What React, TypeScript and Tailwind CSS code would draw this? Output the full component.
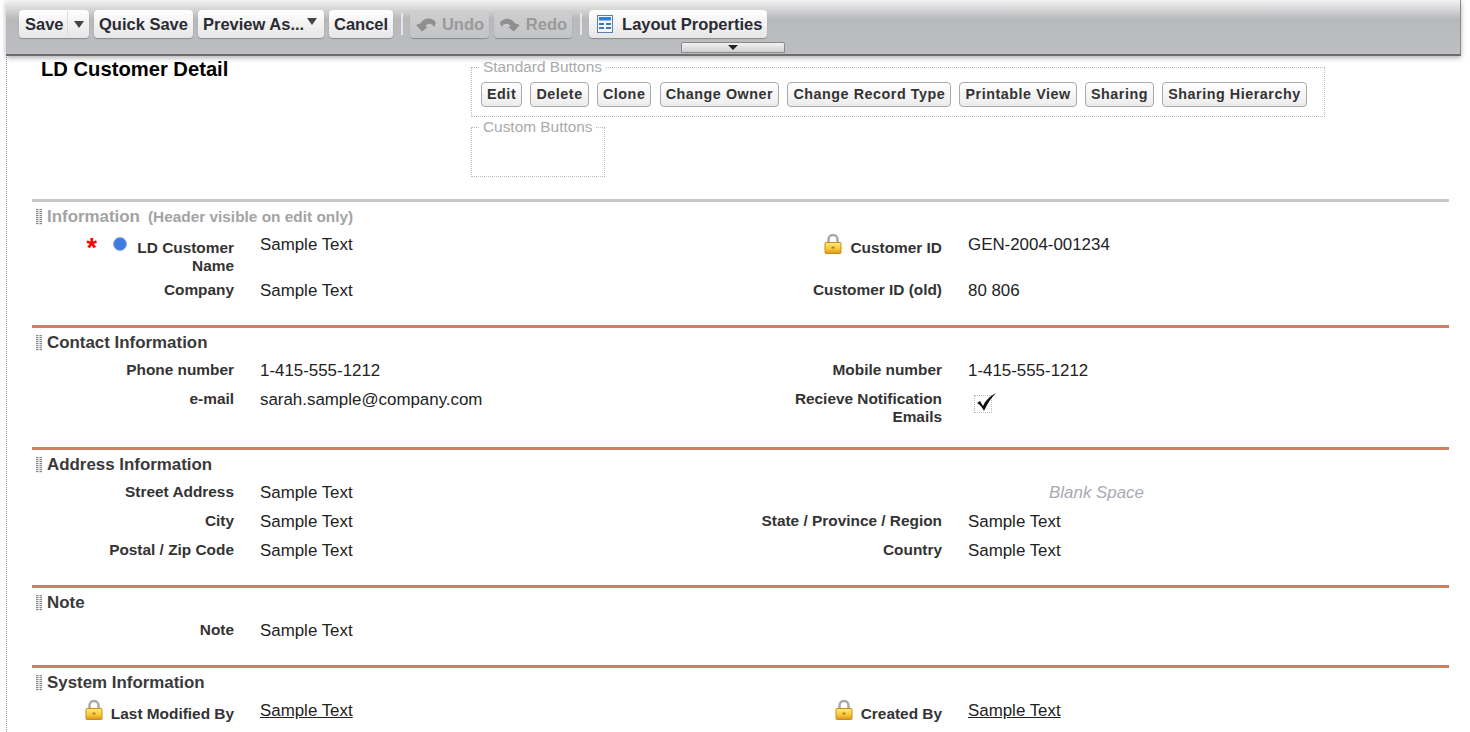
import type { ReactNode } from 'react';

function Lock() {
  return (
    <svg width="18" height="20" viewBox="0 0 18 20" className="shrink-0">
      <defs>
        <linearGradient id="lockBody" x1="0" y1="0" x2="0" y2="1">
          <stop offset="0" stopColor="#ffec7a" />
          <stop offset="0.55" stopColor="#f8cb3a" />
          <stop offset="1" stopColor="#e0921a" />
        </linearGradient>
      </defs>
      <path d="M4.5 9V5.5a4.5 4.5 0 0 1 9 0V9" fill="none" stroke="#a8a8a8" strokeWidth="2.5" />
      <rect x="1" y="8.5" width="16" height="11" rx="1" fill="url(#lockBody)" stroke="#cf8a1c" />
      <rect x="7.5" y="12.5" width="3" height="2" fill="#b67f1e" />
    </svg>
  );
}

function Grip() {
  const rows = [0, 2, 4, 6, 8, 10, 12, 14];
  return (
    <svg width="6" height="16" viewBox="0 0 6 16" className="shrink-0">
      {rows.map((y) => (
        <g key={y} fill="#8a8a8a">
          <rect x="0" y={y} width="2.5" height="1.2" />
          <rect x="3.5" y={y} width="2.5" height="1.2" />
        </g>
      ))}
    </svg>
  );
}

function Caret() {
  return <span className="block h-0 w-0 border-x-[5px] border-t-[7px] border-x-transparent border-t-[#444]" />;
}

function ArrowIcon({ flip }: { flip?: boolean }) {
  return (
    <svg width="22" height="16" viewBox="0 0 22 16" className={flip ? '-scale-x-100' : ''}>
      <path d="M1 9l4.5-1.6C8.5 2.5 16 0 21 6.5L19.5 11C17 7 13 6.5 10.5 10l2 1.2L7 15.5z" fill="#8f8f8f" />
    </svg>
  );
}

function TableIcon() {
  return (
    <svg width="16" height="18" viewBox="0 0 16 18" className="shrink-0">
      <rect x="0.5" y="0.5" width="15" height="17" fill="#f4f8fd" stroke="#5d7ea6" />
      <rect x="2" y="2" width="12" height="3.5" fill="#2f80dc" />
      <path d="M2 8h5v2H2zM9 8h5v2H9zM2 12h5v2H2zM9 12h5v2H9z" fill="#3f79ba" />
    </svg>
  );
}

function ToolButton({ children, disabled, className }: { children: ReactNode; disabled?: boolean; className?: string }) {
  return (
    <div
      className={`flex h-[28px] items-center rounded-[4px] px-[5px] text-[16.5px] font-bold whitespace-nowrap shadow-[0_1px_1px_#8a8a8a] ${
        disabled ? 'bg-linear-to-b from-[#cfcfd0] to-[#c3c4c6] text-[#9a9a9a]' : 'bg-linear-to-b from-white to-[#e6e6e6] text-[#2b2b33]'
      } ${className ?? ''}`}
    >
      {children}
    </div>
  );
}

function Separator() {
  return <div className="h-[22px] w-[2px] bg-[#e4e4e4]" />;
}

function Toolbar() {
  return (
    <div className="relative z-10 -ml-px h-[56px] w-[1455px] border-r border-b-[2px] border-r-[#8f8585] border-b-[#6d6d6d] bg-linear-to-b from-[#f3f3f3] via-[#b8b9bb] via-35% to-[#bdbec2] pt-[10px] pl-[13px] shadow-[0_2px_5px_rgba(0,0,0,0.3)]">
      <div className="flex items-center">
        <ToolButton className="w-[70px] pl-[6px]">
          <span>Save</span>
          <span className="mr-[6px] ml-[3px] h-[26px] w-px bg-[#dcdcdc]" />
          <Caret />
        </ToolButton>
        <ToolButton className="ml-[5px]">Quick Save</ToolButton>
        <ToolButton className="ml-[5px] w-[126px]">
          <span>Preview As...</span>
          <span className="mb-[5px] ml-[3px]">
            <Caret />
          </span>
        </ToolButton>
        <ToolButton className="ml-[5px]">Cancel</ToolButton>
        <div className="mr-[7px] ml-[8px]">
          <Separator />
        </div>
        <ToolButton disabled className="w-[79px] gap-[5px]">
          <ArrowIcon />
          Undo
        </ToolButton>
        <ToolButton disabled className="ml-[5px] w-[78px] gap-[5px]">
          <ArrowIcon flip />
          Redo
        </ToolButton>
        <div className="mr-[7px] ml-[8px]">
          <Separator />
        </div>
        <ToolButton className="w-[178px] gap-[9px] pl-[8px]">
          <TableIcon />
          Layout Properties
        </ToolButton>
      </div>
      {/* collapse handle sits on the toolbar's lower edge */}
      <div className="absolute top-[42px] left-[675px] flex h-[11px] w-[104px] items-center justify-center rounded-t-[2px] border border-[#8b8b8b] bg-linear-to-b from-[#f2f2f2] to-[#cfcfcf]">
        <span className="h-0 w-0 border-x-[5px] border-t-[5px] border-x-transparent border-t-[#222]" />
      </div>
    </div>
  );
}

function LayoutButton({ label }: { label: string }) {
  return (
    <div className="flex h-[25px] items-center rounded-[4px] border border-[#a9a9a9] bg-linear-to-b from-white to-[#ececec] px-[5px] text-[14.3px] font-bold tracking-[0.55px] whitespace-nowrap text-[#333]">
      {label}
    </div>
  );
}

function Label({ children, className }: { children: ReactNode; className?: string }) {
  return <div className={`text-right text-[15.4px] leading-[18px] font-bold text-[#333] ${className ?? ''}`}>{children}</div>;
}

function Field({
  label,
  value,
  lock,
  underline,
  labelTop = 'pt-[6px]',
  valueTop = 'pt-[7px]',
}: {
  label: string;
  value: string;
  lock?: boolean;
  underline?: boolean;
  labelTop?: string;
  valueTop?: string;
}) {
  return (
    <div className="flex min-h-[29px]">
      <div className={`flex w-[202px] shrink-0 justify-end ${labelTop}`}>
        {lock && (
          <span className="mt-[-5px] mr-[8px]">
            <Lock />
          </span>
        )}
        <Label>{label}</Label>
      </div>
      <div className={`pl-[26px] text-[16.9px] leading-[18px] text-[#222] ${valueTop} ${underline ? 'underline' : ''}`}>{value}</div>
    </div>
  );
}

function Section({ title, note, height, first, children }: { title: string; note?: string; height: string; first?: boolean; children: ReactNode }) {
  return (
    <section className={`w-[1417px] border-t-[3px] ${height} ${first ? 'border-[#c8c8c8]' : 'border-[#cd8064]'}`}>
      <div className={`flex h-[28px] items-center gap-[5px] pt-px pl-[4px] text-[16.9px] font-bold ${first ? 'text-[#a3a3a3]' : 'text-[#3a3a3a]'}`}>
        <Grip />
        <span>
          {title}
          {note && <span className="ml-[8px] text-[15.4px]">{note}</span>}
        </span>
      </div>
      <div className={`grid grid-cols-[708px_708px] ${first ? '' : '-mt-px'}`}>{children}</div>
    </section>
  );
}

export default function App() {
  return (
    <div className="h-[732px] w-[1470px] overflow-hidden bg-white font-['Liberation_Sans',Arial,sans-serif]">
      <div className="ml-[6px] h-full border-l border-dotted border-[#999]">
        <Toolbar />
        <div className="pl-[25px]">
          <div className="flex h-[143px]">
            <h1 className="w-[439px] pt-px pl-[9px] text-[20.2px] leading-[24px] font-bold text-black">LD Customer Detail</h1>
            <div className="pt-[2px]">
              <fieldset className="h-[59px] w-[854px] border border-dotted border-[#bbb]">
                <legend className="ml-[8px] px-[3px] text-[15.4px] leading-[18px] text-[#aaa]">Standard Buttons</legend>
                <div className="flex gap-[8.25px] pt-[6px] pl-[9px]">
                  {['Edit', 'Delete', 'Clone', 'Change Owner', 'Change Record Type', 'Printable View', 'Sharing', 'Sharing Hierarchy'].map((label) => (
                    <LayoutButton key={label} label={label} />
                  ))}
                </div>
              </fieldset>
              <fieldset className="mt-px h-[59px] w-[134px] border border-dotted border-[#bbb]">
                <legend className="ml-[8px] px-[3px] text-[15.4px] leading-[18px] text-[#aaa]">Custom Buttons</legend>
              </fieldset>
            </div>
          </div>

          <Section first title="Information" note="(Header visible on edit only)" height="h-[126px]">
            <div className="flex h-[45px]">
              <div className="flex w-[202px] shrink-0 justify-end pt-[9px]">
                <span className="mt-[-4px] mr-[16px] text-[27px] leading-[26px] font-bold text-[#f00]">*</span>
                <span className="mt-[-2px] mr-[10px] h-[14px] w-[14px] rounded-full border border-[#8fb0e6] bg-[#3f7bdc]" />
                <Label className="w-[97px]">LD Customer Name</Label>
              </div>
              <div className="pt-[6px] pl-[26px] text-[16.9px] leading-[18px] text-[#222]">Sample Text</div>
            </div>
            <Field lock label="Customer ID" value="GEN-2004-001234" labelTop="pt-[9px]" valueTop="pt-[6px]" />
            <Field label="Company" value="Sample Text" />
            <Field label="Customer ID (old)" value="80 806" />
          </Section>

          <Section title="Contact Information" height="h-[122px]">
            <Field label="Phone number" value="1-415-555-1212" />
            <Field label="Mobile number" value="1-415-555-1212" />
            <Field label="e-mail" value="sarah.sample@company.com" />
            <div className="flex">
              <div className="flex w-[202px] shrink-0 justify-end pt-[6px]">
                <Label className="w-[160px]">Recieve Notification Emails</Label>
              </div>
              <div className="relative mt-[11px] ml-[32px] h-[18px] w-[18px] border border-dotted border-[#bbb]">
                <svg width="24" height="22" viewBox="0 0 24 22" className="absolute -top-[5px] left-0">
                  <path d="M2 12l3-2 3 5C11 9 15 5 21 2c-5 5-9 11-12 18-2-4-4-6-7-8z" fill="#111" />
                </svg>
              </div>
            </div>
          </Section>

          <Section title="Address Information" height="h-[138px]">
            <Field label="Street Address" value="Sample Text" />
            <div className="pt-[7px] pl-[5px] text-center text-[16.9px] leading-[18px] text-[#a9a9b3] italic">Blank Space</div>
            <Field label="City" value="Sample Text" />
            <Field label="State / Province / Region" value="Sample Text" />
            <Field label="Postal / Zip Code" value="Sample Text" />
            <Field label="Country" value="Sample Text" />
          </Section>

          <Section title="Note" height="h-[80px]">
            <Field label="Note" value="Sample Text" />
          </Section>

          <Section title="System Information" height="h-[67px]">
            <Field lock underline label="Last Modified By" value="Sample Text" labelTop="pt-[10px]" />
            <Field lock underline label="Created By" value="Sample Text" labelTop="pt-[10px]" />
          </Section>
        </div>
      </div>
    </div>
  );
}
